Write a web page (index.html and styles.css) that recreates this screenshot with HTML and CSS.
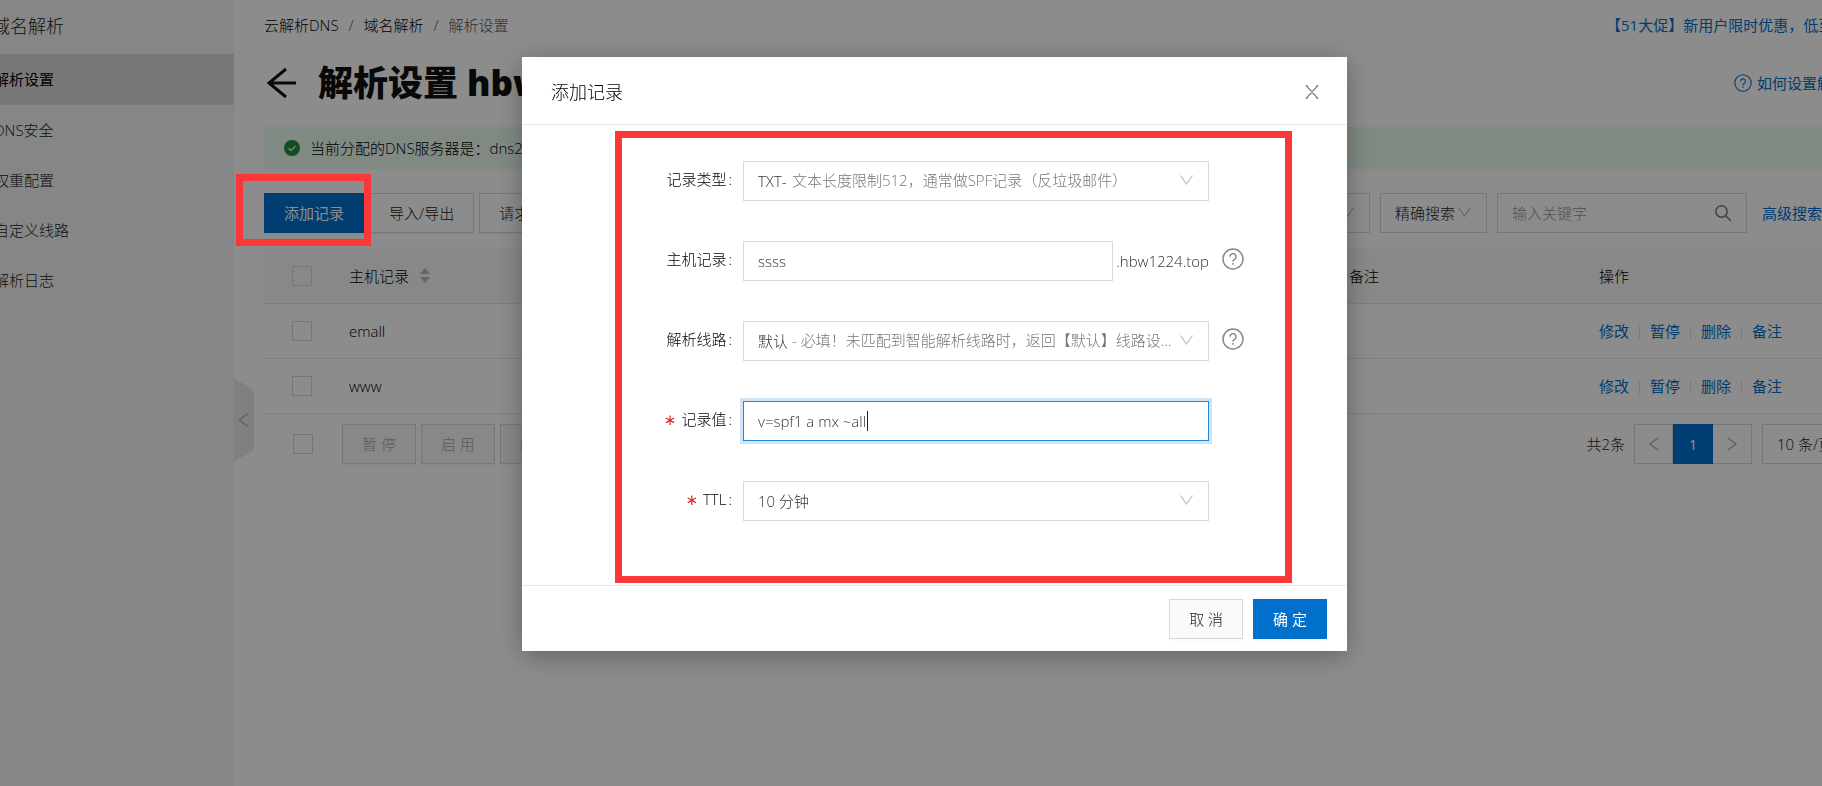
FILE: index.html
```html
<!DOCTYPE html>
<html lang="zh-CN">
<head>
<meta charset="utf-8">
<meta name="viewport" content="width=device-width, initial-scale=1">
<title>解析设置</title>
<link rel="stylesheet" href="styles.css">
</head>
<body>
<div class="shell">
  <nav class="side">
    <div class="side-title">域名解析</div>
    <a class="side-link side-link-active" href="#">解析设置</a>
    <a class="side-link" href="#">DNS安全</a>
    <a class="side-link" href="#">权重配置</a>
    <a class="side-link" href="#">自定义线路</a>
    <a class="side-link" href="#">解析日志</a>
    <button class="side-toggle" type="button" aria-label="收起">
      <svg width="20" height="84" viewBox="0 0 20 84"><path d="M0 0L17.500 10.500Q20 12 20 15V69Q20 72 17.500 73.500L0 84Z" fill="#eaeaea"/><path d="M14.500 35L5.500 42L14.500 49" fill="none" stroke="#b4b4b4" stroke-width="1.500"/></svg>
    </button>
  </nav>
  <main class="main">
    <div class="crumb-row">
      <div class="crumbs"><a href="#">云解析DNS</a><i>/</i><a href="#">域名解析</a><i>/</i><span>解析设置</span></div>
      <a class="link promo" href="#">【51大促】新用户限时优惠，低至1折</a>
    </div>
    <div class="title-row">
      <button class="back" type="button" aria-label="返回"><svg width="32" height="32" viewBox="0 0 32 32" fill="none" stroke="#111" stroke-width="3"><path d="M32 16H5M22 2L5 16L22 30"/></svg></button>
      <h1>解析设置 hbw1224.top</h1>
      <a class="link help" href="#"><svg width="18" height="18" viewBox="0 0 22 22" fill="none" stroke="currentColor" stroke-width="1.300"><circle cx="11" cy="11" r="10"/><path d="M8 9a3 3 0 1 1 4.600 2.500Q11 12.500 11 14M11 15.500V17"/></svg>如何设置解析？</a>
    </div>
    <div class="notice"><svg width="16" height="16" viewBox="0 0 16 16"><circle cx="8" cy="8" r="8" fill="#1e8e3e"/><path d="M4.500 8.200L7 10.600L11.500 5.800" fill="none" stroke="#fff" stroke-width="1.200"/></svg>当前分配的DNS服务器是：dns25.hichina.com, dns26.hichina.com</div>
    <div class="tools">
      <button class="btn btn-primary" type="button">添加记录</button>
      <button class="btn" type="button">导入/导出</button>
      <button class="btn" type="button">请求量统计</button>
      <div class="filters">
        <span class="pick pick-line"><select aria-label="线路"><option>全部线路</option></select><svg class="chev" viewBox="0 0 13 10"><path d="M.5.5L6.500 9L12.500.5"/></svg></span>
        <span class="pick pick-mode"><select aria-label="搜索方式"><option>精确搜索</option></select><svg class="chev" viewBox="0 0 13 10"><path d="M.5.5L6.500 9L12.500.5"/></svg></span>
        <span class="search"><input type="text" placeholder="输入关键字" aria-label="输入关键字"><svg width="18" height="18" viewBox="0 0 18 18" fill="none" stroke="#777" stroke-width="1.500"><circle cx="7.500" cy="7.500" r="5.700"/><path d="M11.500 11.500L17 17"/></svg></span>
        <a class="link advanced" href="#">高级搜索</a>
      </div>
    </div>
    <table class="grid">
      <colgroup><col class="c-check"><col class="c-host"><col class="c-note"><col class="c-ops"></colgroup>
      <thead><tr><th><input type="checkbox" aria-label="全选"></th><th><span class="sort">主机记录<svg width="10" height="16" viewBox="0 0 10 16" fill="#bbb"><path d="M5 0L10 6H0ZM0 9H10L5 15Z"/></svg></span></th><th>备注</th><th>操作</th></tr></thead>
      <tbody>
        <tr><td><input type="checkbox" aria-label="emall"></td><td>emall</td><td></td><td><div class="ops"><a class="link" href="#">修改</a><a class="link" href="#">暂停</a><a class="link" href="#">删除</a><a class="link" href="#">备注</a></div></td></tr>
        <tr><td><input type="checkbox" aria-label="www"></td><td>www</td><td></td><td><div class="ops"><a class="link" href="#">修改</a><a class="link" href="#">暂停</a><a class="link" href="#">删除</a><a class="link" href="#">备注</a></div></td></tr>
      </tbody>
    </table>
    <div class="under">
      <input type="checkbox" aria-label="选择全部">
      <div class="batch">
        <button class="btn" type="button" disabled>暂 停</button>
        <button class="btn" type="button" disabled>启 用</button>
        <button class="btn" type="button" disabled>删 除</button>
      </div>
      <div class="pager">
        <span class="total">共2条</span>
        <button type="button" aria-label="上一页"><svg width="10" height="14" viewBox="0 0 10 14"><path d="M9 1L1 7L9 13"/></svg></button>
        <button class="page-on" type="button">1</button>
        <button type="button" aria-label="下一页"><svg width="10" height="14" viewBox="0 0 10 14"><path d="M1 1L9 7L1 13"/></svg></button>
        <span class="pick pick-size"><select aria-label="每页条数"><option>10 条/页</option></select></span>
      </div>
    </div>
  </main>
</div>
<div class="mask">
  <section class="modal" role="dialog" aria-labelledby="dlg-title">
    <header class="modal-head">
      <h2 id="dlg-title">添加记录</h2>
      <button class="close" type="button" aria-label="关闭"><svg width="14" height="14" viewBox="0 0 14 14" fill="none" stroke="#888" stroke-width="1.300"><path d="M1.300.8L12.700 13.200M12.700.8L1.300 13.200M.5.8H3M11 .8H13.500M.5 13.200H3M11 13.200H13.500"/></svg></button>
    </header>
    <form class="form">
      <div class="row">
        <label for="type">记录类型<b>:</b></label>
        <span class="pick field"><select id="type"><option>TXT-</option></select><span class="hint">文本长度限制512，通常做SPF记录（反垃圾邮件）</span><svg class="chev" viewBox="0 0 13 10"><path d="M.5.5L6.500 9L12.500.5"/></svg></span>
      </div>
      <div class="row">
        <label for="host">主机记录<b>:</b></label>
        <span class="field host"><input id="host" type="text" value="ssss"><span>.hbw1224.top</span></span>
        <svg class="tip" viewBox="0 0 22 22"><circle cx="11" cy="11" r="10"/><path d="M8 8.700a3 3 0 1 1 4.700 2.400Q11 12.100 11 13.700M11 15V16.800"/></svg>
      </div>
      <div class="row">
        <label for="line">解析线路<b>:</b></label>
        <span class="pick field"><select id="line"><option>默认</option></select><span class="hint">- 必填！未匹配到智能解析线路时，返回【默认】线路设置结果</span><svg class="chev" viewBox="0 0 13 10"><path d="M.5.5L6.500 9L12.500.5"/></svg></span>
        <svg class="tip" viewBox="0 0 22 22"><circle cx="11" cy="11" r="10"/><path d="M8 8.700a3 3 0 1 1 4.700 2.400Q11 12.100 11 13.700M11 15V16.800"/></svg>
      </div>
      <div class="row">
        <label class="must" for="value">记录值<b>:</b></label>
        <span class="field value"><input id="value" type="text" value="v=spf1 a mx ~all"><span class="caret"></span></span>
      </div>
      <div class="row">
        <label class="must" for="ttl">TTL<b>:</b></label>
        <span class="pick field"><select id="ttl"><option>10 分钟</option></select><svg class="chev" viewBox="0 0 13 10"><path d="M.5.5L6.500 9L12.500.5"/></svg></span>
      </div>
    </form>
    <footer class="modal-foot">
      <button class="btn btn-cancel" type="button">取 消</button>
      <button class="btn btn-primary btn-ok" type="button">确 定</button>
    </footer>
    <div class="frame frame-form"></div>
  </section>
</div>
<div class="frame frame-add"></div>
</body>
</html>
```

FILE: styles.css
```css
* { box-sizing: border-box; }
body {
  margin: 0;
  overflow: hidden;
  background: #fff;
  color: #222;
  font: 300 15px/20px "Open Sans", "Noto Sans CJK SC", sans-serif;
}
a { color: inherit; text-decoration: none; }
button, input, select { font: inherit; color: inherit; margin: 0; border-radius: 0; }
button { cursor: pointer; }
svg { display: block; flex: none; }

.shell { display: flex; min-height: 100vh; }
.side {
  position: relative;
  flex: none;
  width: 234px;
  background: #f5f5f5;
}
.side-title {
  height: 54px;
  margin-left: -8px;
  font-size: 18px;
  line-height: 52px;
}
.side-link {
  display: block;
  height: 50px;
  padding-right: 20px;
  line-height: 50px;
  text-indent: -6px;
}
.side-link-active { height: 51px; background: #dadada; color: #000; font-weight: 400; }
.side-toggle {
  position: absolute;
  top: 378px;
  left: 100%;
  padding: 0;
  border: 0;
  background: none;
}

.main { flex: 1; min-width: 0; margin-right: -40px; padding-left: 30px; }
.link { color: #0070cc; font-weight: 400; }
.crumb-row, .title-row { display: flex; align-items: center; white-space: nowrap; }
.crumb-row { height: 50px; }
.crumbs { display: flex; gap: 10px; color: #555; }
.crumbs a { color: #000; }
.crumbs i { font-style: normal; width: 5px; text-align: center; }
.promo { margin-left: auto; min-width: 256px; }
.title-row { height: 66px; }
.back { padding: 0; border: 0; background: none; }
h1 {
  margin: 0 0 0 22px;
  color: #111;
  font-size: 35px;
  font-weight: 800;
  line-height: 48px;
}
.help { display: flex; align-items: center; gap: 5px; margin-left: auto; }

.notice {
  display: flex;
  align-items: center;
  gap: 10px;
  height: 42px;
  margin-top: 11px;
  padding-left: 20px;
  background: #e9fbee;
  color: #000;
}
.tools { display: flex; gap: 5px; margin: 24px 0 16px; white-space: nowrap; }
.btn {
  height: 40px;
  padding: 0 19px;
  border: 1px solid #d9d9d9;
  background: transparent;
  box-shadow: 0 2px 0 rgba(0, 0, 0, .02);
}
.btn-primary { border-color: #0070cc; background: #0070cc; color: #fff; font-weight: 400; }
.btn:disabled { background: #f7f7f7; color: #a8a8a8; }
.filters { display: flex; align-items: center; gap: 10px; margin-left: auto; }

.pick { position: relative; display: grid; height: 40px; }
.pick select {
  grid-area: 1 / 1;
  width: 100%;
  padding: 0 14px;
  border: 1px solid #d9d9d9;
  background: transparent;
  appearance: none;
  outline: 0;
}
.chev {
  position: absolute;
  top: 14px;
  right: 16px;
  width: 13px;
  height: 10px;
  fill: none;
  stroke: #bbb;
  stroke-width: 1.2;
  pointer-events: none;
}
.pick-line { width: 160px; }
.pick-mode { width: 107px; }
.pick-size { width: 100px; margin-left: 10px; }
.search { position: relative; width: 250px; margin: 0 5px 0 0; }
.search input {
  display: block;
  width: 100%;
  height: 40px;
  padding: 0 14px;
  border: 1px solid #d9d9d9;
  background: transparent;
}
.search input::placeholder { color: #999; opacity: 1; }
.search svg { position: absolute; top: 11px; right: 15px; }
.advanced { width: 100px; }

.grid { width: 100%; border-collapse: collapse; table-layout: fixed; }
.c-check { width: 70px; }
.c-note { width: 250px; }
.c-ops { width: 278px; }
.grid th, .grid td {
  height: 55px;
  padding: 0 15px;
  border-bottom: 1px solid #e5e5e5;
  text-align: left;
  font-weight: 300;
}
.grid th { height: 54px; background: #f7f7f7; color: #000; }
.grid td { color: #000; }
.grid th:first-child, .grid td:first-child { padding-left: 28px; }
.grid th:last-child, .grid td:last-child { padding-right: 0; }
.sort { display: flex; align-items: center; gap: 11px; }
input[type="checkbox"] {
  display: block;
  width: 20px;
  height: 20px;
  border: 1px solid #d9d9d9;
  appearance: none;
}
.ops { display: flex; align-items: center; }
.ops .link + .link { margin-left: 10px; }
.ops .link + .link::before {
  content: "";
  display: inline-block;
  width: 1px;
  height: 13px;
  margin-right: 10px;
  background: #ddd;
  vertical-align: -2px;
}
.under { display: flex; align-items: center; margin-top: 10px; padding-left: 29px; white-space: nowrap; }
.batch { display: flex; gap: 5px; margin-left: 29px; }
.pager { display: flex; align-items: center; margin-left: auto; }
.total { margin-right: 9px; }
.pager button {
  display: grid;
  place-items: center;
  width: 39px;
  height: 40px;
  padding: 0;
  border: 1px solid #d9d9d9;
  background: transparent;
}
.pager button + button { border-left: 0; }
.pager svg { fill: none; stroke: #aaa; stroke-width: 1.2; }
.pager .page-on { width: 40px; border: 0; background: #0070cc; color: #fff; font-weight: 400; }

.mask {
  position: fixed;
  inset: 0;
  display: flex;
  align-items: flex-start;
  justify-content: center;
  padding: 57px 0 0 47px;
  background: rgba(0, 0, 0, .45);
}
.modal {
  position: relative;
  width: 825px;
  background: #fff;
  box-shadow: 0 5px 25px rgba(0, 0, 0, .3);
}
.modal-head {
  display: flex;
  align-items: center;
  justify-content: space-between;
  height: 68px;
  padding: 2px 28px 0 29px;
  border-bottom: 1px solid #e3e8ed;
}
h2 { margin: 0; font-size: 18px; font-weight: 300; line-height: 24px; color: #000; }
.close { padding: 0; border: 0; background: none; }
.form { display: grid; gap: 40px; padding: 36px 28px 64px; }
.row { display: flex; align-items: center; }
.row label {
  width: 182px;
  margin-right: 11px;
  padding-bottom: 4px;
  text-align: right;
  color: #000;
}
.row b { margin-left: 2px; font-weight: 300; }
.must::before {
  content: "∗";
  margin-right: 5px;
  color: #d93026;
  font: 400 15px/20px "DejaVu Sans", sans-serif;
}
.field { width: 466px; color: #333; }
.host { display: flex; align-items: center; justify-content: space-between; }
.host input { width: 370px; }
.field input {
  height: 40px;
  padding: 0 14px;
  border: 1px solid #d9d9d9;
  background: #fff;
  outline: 0;
}
.hint {
  grid-area: 1 / 1;
  overflow: hidden;
  margin: 0 34px 0 49px;
  line-height: 39px;
  color: #777;
  white-space: nowrap;
  text-overflow: ellipsis;
  pointer-events: none;
}
.value { position: relative; }
.value input {
  display: block;
  width: 100%;
  border-color: #2188d9;
  box-shadow: 0 0 0 3px rgba(0, 112, 204, .18);
}
.caret { position: absolute; top: 10px; left: 124px; width: 1px; height: 20px; background: #222; }
.tip {
  width: 22px;
  height: 22px;
  margin: 0 0 5px 13px;
  fill: none;
  stroke: #888;
  stroke-width: 1.5;
}
.modal-foot {
  display: flex;
  justify-content: flex-end;
  gap: 10px;
  padding: 13px 20px 12px;
  border-top: 1px solid #e8e8e8;
}
.btn-cancel { background: #fafafa; }
.frame { position: absolute; border: 7px solid #fb3838; pointer-events: none; }
.frame-form { inset: 74px 55px 68px 93px; }
.frame-add { top: 174px; left: 236px; width: 135px; height: 72px; }
```
